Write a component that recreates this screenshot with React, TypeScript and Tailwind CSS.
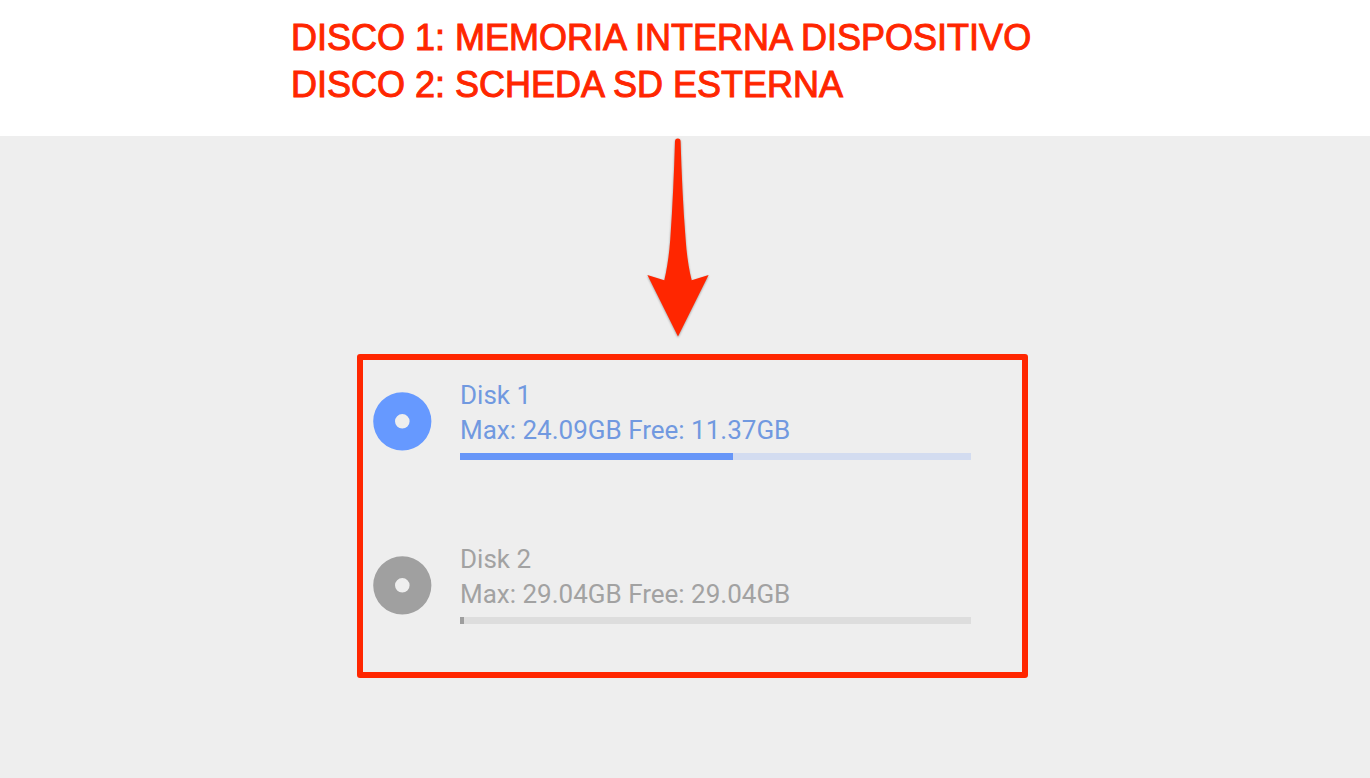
type Disk = {
  name: string;
  max: string;
  free: string;
  used: number;
  text: string;
  solid: string;
  track: string;
  icon: string;
};

const disks: Disk[] = [
  {
    name: "Disk 1",
    max: "24.09GB",
    free: "11.37GB",
    used: 53.5,
    text: "text-[#7199e0]",
    solid: "bg-[#6796f8]",
    track: "bg-[#d3dcf0]",
    icon: "text-[#6699ff]",
  },
  {
    name: "Disk 2",
    max: "29.04GB",
    free: "29.04GB",
    used: 0.8,
    text: "text-[#a2a2a2]",
    solid: "bg-[#9e9e9e]",
    track: "bg-[#dddddd]",
    icon: "text-[#a0a0a0]",
  },
];

function DiscIcon({ className }: { className: string }) {
  return (
    <svg viewBox="0 0 59 59" className={`size-[59px] shrink-0 ${className}`} aria-hidden="true">
      <path
        fill="currentColor"
        fillRule="evenodd"
        d="M29.3 0.2a29.1 29.1 0 1 0 0 58.2a29.1 29.1 0 1 0 0-58.2zM29.3 22a7.3 7.3 0 1 1 0 14.6a7.3 7.3 0 1 1 0-14.6z"
      />
    </svg>
  );
}

function Arrow() {
  return (
    <svg viewBox="0 0 64 204" className="h-[204px] w-[64px] drop-shadow-[0_1px_1px_rgba(0,0,0,0.35)]" aria-hidden="true">
      <path
        fill="#ff2600"
        d="M29 5.5Q29 2.5 31.8 2.5Q34.6 2.5 34.6 5.5C35.6 38 37 70 39.6 103C40.6 118 42.6 132 45.7 144.2L62.6 139L32 200.5L1.4 139L18.3 144.2C21.2 132 23.2 118 24.3 103C26.6 70 28 38 29 5.5Z"
      />
    </svg>
  );
}

function DiskRow({ disk }: { disk: Disk }) {
  return (
    <li className="flex items-start gap-7">
      <div className="pt-[14px]">
        <DiscIcon className={disk.icon} />
      </div>
      <div className={`min-w-0 flex-1 text-[26px] leading-[35px] ${disk.text}`}>
        <h2>{disk.name}</h2>
        <p>
          Max: {disk.max} Free: {disk.free}
        </p>
        <div
          role="progressbar"
          aria-label={disk.name}
          aria-valuenow={disk.used}
          aria-valuemin={0}
          aria-valuemax={100}
          className={`mt-[5px] h-[7px] ${disk.track}`}
        >
          <div className={`h-full ${disk.solid}`} style={{ width: `${disk.used}%` }} />
        </div>
      </div>
    </li>
  );
}

export default function App() {
  return (
    <div className="flex min-h-screen flex-col bg-[#eeeeee]">
      <header className="bg-white pt-[14px] pb-7">
        <h1 className="mx-auto max-w-[788px] font-['Liberation_Sans',Arial,sans-serif] text-[36px] leading-[47px] text-[#ff2600] [-webkit-text-stroke:1px_#ff2600]">
          DISCO 1: MEMORIA INTERNA DISPOSITIVO
          <br />
          DISCO 2: SCHEDA SD ESTERNA
        </h1>
      </header>
      <main className="flex flex-1 flex-col pb-[100px] font-[Roboto,sans-serif]">
        <div className="flex justify-center pr-[14px]">
          <Arrow />
        </div>
        <div className="mt-[14px] pl-[15px]">
          <ul className="mx-auto flex max-w-[671px] flex-col gap-[82px] rounded-[3px] border-[6px] border-[#ff2600] pt-[18px] pr-[51px] pb-12 pl-[10px]">
            {disks.map((disk) => (
              <DiskRow key={disk.name} disk={disk} />
            ))}
          </ul>
        </div>
      </main>
    </div>
  );
}
